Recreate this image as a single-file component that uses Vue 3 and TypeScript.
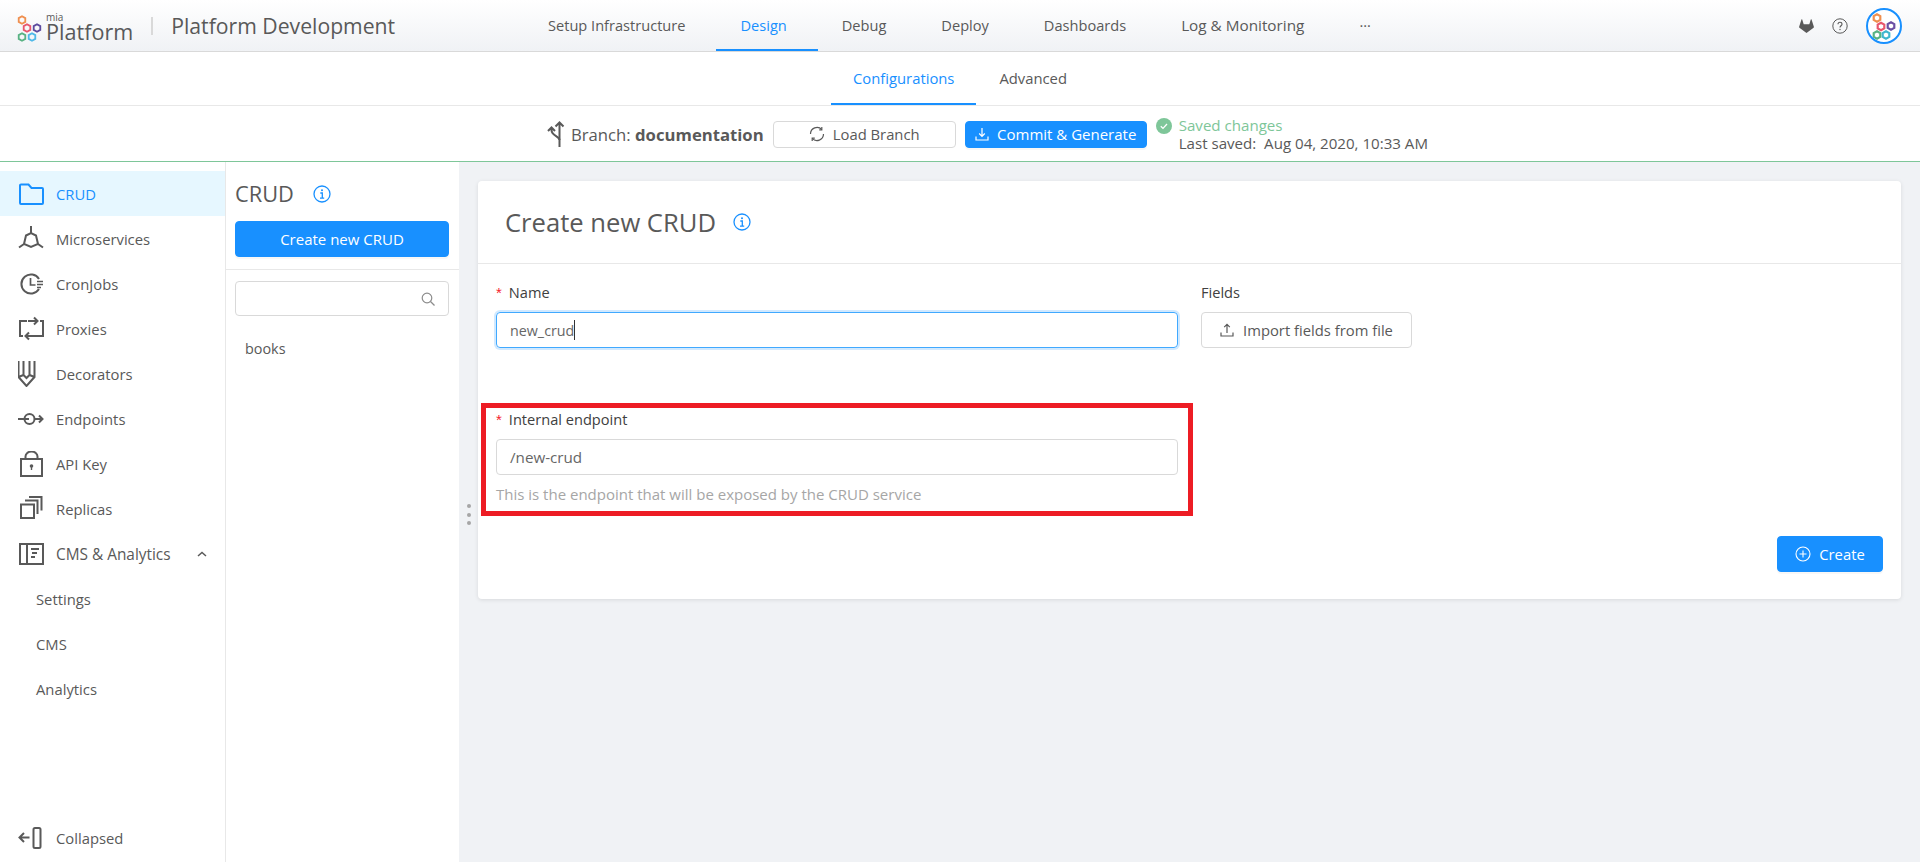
<script setup lang="ts">
import { ref } from 'vue';

interface SideItem {
  label: string;
  icon: string;
  active?: boolean;
}

interface Hex {
  x: number;
  y: number;
  color: string;
}

const topNav = ['Setup Infrastructure', 'Design', 'Debug', 'Deploy', 'Dashboards', 'Log & Monitoring', '···'];
const activeTop = ref('Design');

const sideItems: SideItem[] = [
  { label: 'CRUD', icon: 'folder', active: true },
  { label: 'Microservices', icon: 'micro' },
  { label: 'CronJobs', icon: 'cron' },
  { label: 'Proxies', icon: 'proxy' },
  { label: 'Decorators', icon: 'deco' },
  { label: 'Endpoints', icon: 'endpoint' },
  { label: 'API Key', icon: 'key' },
  { label: 'Replicas', icon: 'replica' },
];
const subItems = ['Settings', 'CMS', 'Analytics'];

const logoHexes: Hex[] = [
  { x: 5, y: 5, color: '#ef8f4f' },
  { x: 10, y: 13, color: '#e8566d' },
  { x: 20, y: 13, color: '#5c4a9e' },
  { x: 5, y: 22, color: '#58b283' },
  { x: 15, y: 22, color: '#4fb9e8' },
];

const avatarHexes: Hex[] = [
  { x: 9, y: 8, color: '#ef8f4f' },
  { x: 13, y: 16.5, color: '#e8566d' },
  { x: 23, y: 16, color: '#6a4fa3' },
  { x: 9, y: 25, color: '#58b283' },
  { x: 18, y: 25, color: '#3fb7cf' },
];

function hexPoints(cx: number, cy: number, r: number): string {
  const pts: string[] = [];
  for (let i = 0; i < 6; i++) {
    const a = (Math.PI / 3) * i + Math.PI / 6;
    pts.push(`${(cx + r * Math.cos(a)).toFixed(2)},${(cy + r * Math.sin(a)).toFixed(2)}`);
  }
  return pts.join(' ');
}
</script>

<template>
  <div class="page">
    <header class="topbar">
      <div class="brand">
        <svg class="logo" width="25" height="27" viewBox="0 0 25 27" fill="none" stroke-width="1.800">
          <polygon v-for="h in logoHexes" :key="h.color" :points="hexPoints(h.x, h.y, 3.800)" :stroke="h.color" />
        </svg>
        <div class="wordmark">
          <span class="mia">mia</span>
          <span class="platform">Platform</span>
        </div>
        <span class="brand-sep"></span>
        <span class="project">Platform Development</span>
      </div>
      <nav class="top-nav">
        <a
          v-for="item in topNav"
          :key="item"
          class="top-link"
          :class="{ active: item === activeTop, amp: item.includes('&') }"
        >{{ item }}</a>
      </nav>
      <div class="top-icons">
        <svg width="15" height="14" viewBox="0 0 16 15" fill="#595959">
          <path d="M8 15L.4 9.300C.1 9.100 0 8.700.1 8.400L2.600.6c.1-.4.6-.4.8 0L5 5.500h6L12.600.6c.2-.4.700-.4.800 0l2.500 7.800c.1.300 0 .7-.3.900z" />
        </svg>
        <svg width="16" height="16" viewBox="0 0 16 16" fill="none" stroke="#595959">
          <circle cx="8" cy="8" r="7.200" stroke-width="1" />
          <path d="M6 6.300c0-1.200.9-2 2-2s2 .8 2 1.900c0 1.500-2 1.600-2 3.200" stroke-width="1.100" />
          <circle cx="8" cy="11.500" r=".7" fill="#595959" stroke="none" />
        </svg>
        <div class="avatar">
          <svg width="32" height="32" viewBox="0 0 32 32" fill="none" stroke-width="2.200">
            <polygon v-for="h in avatarHexes" :key="h.color" :points="hexPoints(h.x, h.y, 3.800)" :stroke="h.color" />
          </svg>
        </div>
      </div>
    </header>

    <div class="subnav">
      <a class="sub-link active">Configurations</a>
      <a class="sub-link">Advanced</a>
    </div>

    <div class="branchbar">
      <svg class="branch-icon" width="18" height="26" viewBox="0 0 18 26" fill="none" stroke="#595959" stroke-width="2">
        <path d="M12.500 26V1.500M8.500 5.500L12.500 1.500 16.500 5.500" />
        <path d="M12.500 19C12.500 15 4.500 15 4.500 9V7M1 10L4.500 6.500 8 10" />
      </svg>
      <span class="branch-label">Branch: <b>documentation</b></span>
      <button class="btn btn-default load-btn">
        <svg width="16" height="16" viewBox="0 0 16 16" fill="none" stroke="#595959" stroke-width="1.200">
          <path d="M14.500 8A6.500 6.500 0 0 1 3.200 12.400M1.500 8A6.500 6.500 0 0 1 12.800 3.600" />
          <path d="M12.800 1v2.800h-2.600M3.200 15v-2.800h2.600" />
        </svg>
        Load Branch
      </button>
      <button class="btn btn-primary commit-btn">
        <svg width="14" height="14" viewBox="0 0 14 14" fill="none" stroke="#fff" stroke-width="1.200">
          <path d="M7 1v8M4.200 6.500L7 9.300l2.800-2.800M1 9.500V13h12V9.500" />
        </svg>
        Commit &amp; Generate
      </button>
      <div class="saved">
        <svg width="16" height="16" viewBox="0 0 16 16">
          <circle cx="8" cy="8" r="8" fill="#7ec699" />
          <path d="M4.800 8.200l2.200 2.200 4-4.400" fill="none" stroke="#fff" stroke-width="1.300" />
        </svg>
        <div class="saved-text">
          <div class="saved-title">Saved changes</div>
          <div class="saved-date">Last saved:&nbsp; Aug 04, 2020, 10:33 AM</div>
        </div>
      </div>
    </div>

    <div class="body">
      <aside class="sidebar">
        <ul class="side-list">
          <li v-for="item in sideItems" :key="item.label" class="side-item" :class="{ active: item.active }">
            <svg class="side-icon" width="26" height="26" viewBox="0 0 26 26" fill="none" stroke="currentColor" stroke-width="2">
              <path v-if="item.icon === 'folder'" d="M2 4.500a1 1 0 0 1 1-1h7.500l3 3.500H24a1 1 0 0 1 1 1V22a1 1 0 0 1-1 1H3a1 1 0 0 1-1-1z" />
              <template v-else-if="item.icon === 'micro'">
                <path d="M13 0v7M8 9.500L13 7l5 2.500L20 18l-7 3-7-3zM20 18l5 3.500M6 18l-5 3.500" />
              </template>
              <template v-else-if="item.icon === 'cron'">
                <path d="M21 8A9.500 9.500 0 1 0 21 18" />
                <path d="M12.500 7v7h5M19 10.500h6M19 13.500h6M19 16.500h4" stroke-width="1.700" />
              </template>
              <template v-else-if="item.icon === 'proxy'">
                <path d="M9 5H2v15h3M17 20h8V5h-3" />
                <path d="M10 5h9M16 1.500L19.500 5 16 8.500M17 20H8M11 16.500L7.500 20l3.500 3.500" />
              </template>
              <template v-else-if="item.icon === 'deco'">
                <path transform="translate(-1.500 0)" d="M2 0v16l8 9 8-9V0M7 0v14M13 0v14M2 16l5-2 3 3 3-3 5 2" />
              </template>
              <template v-else-if="item.icon === 'endpoint'">
                <circle cx="11.500" cy="13" r="5" />
                <path d="M0 13h11M17 13h8M21 9.500l3.500 3.500-3.500 3.500" />
              </template>
              <template v-else-if="item.icon === 'key'">
                <path d="M3 8h21v17H3zM7.500 8V5.500a6 5 0 0 1 12 0V8" />
                <circle cx="13.500" cy="15" r="1.800" fill="currentColor" stroke="none" />
                <path d="M13.500 15v4" stroke-width="1.400" />
              </template>
              <template v-else-if="item.icon === 'replica'">
                <path d="M3 8.500h13V22H3zM7 4.500h12.500V18M11 1h12.500v13.500" />
              </template>
            </svg>
            <span>{{ item.label }}</span>
          </li>
          <li class="side-item">
            <svg class="side-icon" width="26" height="26" viewBox="0 0 26 26" fill="none" stroke="currentColor" stroke-width="2">
              <path d="M2 3h23v20H2zM9 3v20M13 8h8M14 12h5M13 16h4" />
            </svg>
            <span class="cms-label">CMS &amp; Analytics</span>
            <svg class="chevron" width="10" height="6" viewBox="0 0 10 6" fill="none" stroke="#595959" stroke-width="1.500">
              <path d="M1 5l4-3.500L9 5" />
            </svg>
          </li>
          <li v-for="sub in subItems" :key="sub" class="side-item sub">{{ sub }}</li>
        </ul>
        <div class="side-item collapse">
          <svg class="side-icon" width="26" height="26" viewBox="0 0 26 26" fill="none" stroke="currentColor" stroke-width="2">
            <path d="M1.500 12.500h10M6 8l-4.500 4.500L6 17" />
            <rect x="15.500" y="3" width="7" height="20" rx="1.500" />
          </svg>
          <span>Collapsed</span>
        </div>
      </aside>

      <section class="list-col">
        <div class="list-head">
          <div class="list-title">
            CRUD
            <svg class="info" width="18" height="18" viewBox="0 0 18 18" fill="none" stroke="#1890ff" stroke-width="1.300">
              <circle cx="9" cy="9" r="8" />
              <path d="M7.300 8h2v5M7 13.200h4.200" />
              <circle cx="9" cy="5.200" r="1" fill="#1890ff" stroke="none" />
            </svg>
          </div>
          <button class="btn btn-primary new-btn">Create new CRUD</button>
        </div>
        <div class="list-body">
          <div class="search">
            <svg width="14" height="14" viewBox="0 0 14 14" fill="none" stroke="#8c8c8c" stroke-width="1.200">
              <circle cx="6" cy="6" r="4.800" />
              <path d="M9.500 9.500L13.500 13.500" />
            </svg>
          </div>
          <div class="list-row">books</div>
        </div>
      </section>

      <div class="splitter">
        <i></i><i></i><i></i>
      </div>

      <main class="content">
        <div class="card">
          <div class="card-head">
            <span>Create new CRUD</span>
            <svg width="18" height="18" viewBox="0 0 18 18" fill="none" stroke="#1890ff" stroke-width="1.300">
              <circle cx="9" cy="9" r="8" />
              <path d="M7.300 8h2v5M7 13.200h4.200" />
              <circle cx="9" cy="5.200" r="1" fill="#1890ff" stroke="none" />
            </svg>
          </div>
          <div class="card-body">
            <div class="form-row">
              <div class="field wide">
                <label class="label"><em>*</em>Name</label>
                <div class="input focused name-input">new_crud<span class="caret"></span></div>
              </div>
              <div class="field">
                <label class="label">Fields</label>
                <button class="btn btn-default import-btn">
                  <svg width="14" height="14" viewBox="0 0 14 14" fill="none" stroke="#595959" stroke-width="1.200">
                    <path d="M7 10V1.500M4.200 4.200L7 1.400l2.800 2.800M1 9.500V13h12V9.500" />
                  </svg>
                  Import fields from file
                </button>
              </div>
            </div>
            <div class="field wide highlighted">
              <label class="label"><em>*</em>Internal endpoint</label>
              <div class="input endpoint-input">/new-crud</div>
              <div class="help">This is the endpoint that will be exposed by the CRUD service</div>
            </div>
            <div class="actions">
              <button class="btn btn-primary create-btn">
                <svg width="16" height="16" viewBox="0 0 16 16" fill="none" stroke="#fff" stroke-width="1.100">
                  <circle cx="8" cy="8" r="7" />
                  <path d="M8 4.500v7M4.500 8h7" />
                </svg>
                Create
              </button>
            </div>
          </div>
        </div>
      </main>
    </div>
  </div>
</template>

<style>
html, body {
  margin: 0;
  background: #f0f2f5;
}
</style>

<style scoped>
.page {
  width: 1920px;
  height: 862px;
  display: flex;
  flex-direction: column;
  overflow: hidden;
  font-family: "Open Sans", "Noto Sans", sans-serif;
  font-size: 14.6px;
  color: #595959;
  background: #f0f2f5;
}

.topbar {
  height: 51px;
  flex: none;
  display: flex;
  align-items: center;
  background: linear-gradient(#ffffff, #f0f2f5);
  border-bottom: 1px solid #d9d9d9;
}

.brand {
  width: 524px;
  display: flex;
  align-items: center;
  flex: none;
  padding-left: 17px;
  box-sizing: border-box;
}

.logo {
  flex: none;
  align-self: flex-start;
  margin-top: 6px;
}

.wordmark {
  display: flex;
  flex-direction: column;
  margin-left: 4px;
  margin-top: 3px;
}

.mia {
  font-size: 10px;
  line-height: 9px;
  color: #595959;
}

.platform {
  font-size: 21.600px;
  line-height: 20px;
  color: #58595b;
}

.brand-sep {
  width: 2px;
  height: 18px;
  background: #d9d9d9;
  margin: 0 18px;
}

.project {
  font-size: 21.200px;
  color: #595959;
}

.top-nav {
  display: flex;
  align-self: stretch;
}

.top-link {
  padding: 0 31px 0 24px;
  display: flex;
  align-items: center;
  border-bottom: 2px solid transparent;
  height: 51px;
  box-sizing: border-box;
}

.top-link.amp {
  font-size: 15.300px;
}

.top-link.active {
  color: #1890ff;
  border-bottom-color: #1890ff;
}

.top-icons {
  margin-left: auto;
  display: flex;
  align-items: center;
  padding-right: 18px;
  gap: 18px;
}

.avatar {
  width: 36px;
  height: 36px;
  border: 2px solid #1890ff;
  border-radius: 50%;
  box-sizing: border-box;
  background: #fff;
  overflow: hidden;
}

.avatar svg {
  display: block;
}

.subnav {
  height: 53px;
  flex: none;
  display: flex;
  justify-content: center;
  gap: 1px;
  background: #fff;
  border-bottom: 1px solid #e8e8e8;
}

.sub-link {
  padding: 0 22px;
  display: flex;
  align-items: center;
  height: 53px;
  box-sizing: border-box;
  border-bottom: 2px solid transparent;
  font-size: 14.800px;
}

.sub-link.active {
  color: #1890ff;
  border-bottom-color: #1890ff;
}

.branchbar {
  height: 54px;
  padding: 1px 0 0 547px;
  flex: none;
  display: flex;
  align-items: center;
  background: #fff;
  border-bottom: 1px solid #7ec699;
}

.branch-icon {
  flex: none;
  margin-right: 6px;
}

.branch-label {
  font-size: 16.700px;
  margin-right: 9px;
}

.branch-label b {
  font-weight: 700;
}

.btn {
  font-family: inherit;
  font-size: 14.800px;
  border-radius: 4px;
  display: inline-flex;
  align-items: center;
  justify-content: center;
  gap: 8px;
  padding: 0;
  box-sizing: border-box;
  cursor: pointer;
}

.btn-default {
  background: #fff;
  color: #595959;
  border: 1px solid #d9d9d9;
}

.btn-primary {
  background: #1890ff;
  color: #fff;
  border: 1px solid #1890ff;
  box-shadow: 0 2px 0 rgba(0, 0, 0, 0.03);
}

.load-btn {
  width: 183px;
  height: 27px;
  margin-right: 9px;
}

.commit-btn {
  width: 182px;
  height: 27px;
  margin-right: 9px;
  font-size: 15px;
}

.saved {
  display: flex;
  gap: 7px;
  align-items: flex-start;
  font-size: 15.100px;
  line-height: 18px;
  margin-top: -1px;
}

.saved svg {
  margin-top: 2px;
}

.saved-title {
  color: #7ec699;
}

.body {
  flex: 1;
  display: flex;
  min-height: 0;
}

.sidebar {
  width: 226px;
  flex: none;
  box-sizing: border-box;
  background: #fff;
  border-right: 1px solid #e8e8e8;
  padding-top: 9px;
  display: flex;
  flex-direction: column;
}

.side-list {
  list-style: none;
  margin: 0;
  padding: 0;
  flex: 1;
}

.side-item {
  height: 45px;
  box-sizing: border-box;
  display: flex;
  align-items: center;
  padding: 1px 18px 0;
  font-size: 14.800px;
  color: #595959;
}

.side-item.active {
  background: #e6f7ff;
  color: #1890ff;
}

.side-icon {
  flex: none;
  margin-right: 12px;
}

.side-item.sub {
  padding-left: 36px;
}

.cms-label {
  font-size: 15.400px;
}

.chevron {
  margin-left: auto;
}

.collapse {
  margin-bottom: 2px;
}

.list-col {
  width: 233px;
  flex: none;
  background: #fff;
  display: flex;
  flex-direction: column;
}

.list-head {
  padding: 18px 10px 12px 9px;
  border-bottom: 1px solid #e8e8e8;
}

.list-title {
  font-size: 21.800px;
  line-height: 28px;
  display: flex;
  align-items: center;
  gap: 19px;
  margin-bottom: 13px;
}

.new-btn {
  width: 214px;
  height: 36px;
  font-size: 15px;
}

.list-body {
  padding: 11px 10px 0 9px;
}

.search {
  height: 35px;
  border: 1px solid #d9d9d9;
  border-radius: 4px;
  box-sizing: border-box;
  display: flex;
  align-items: center;
  justify-content: flex-end;
  padding-right: 13px;
}

.list-row {
  padding: 22px 0 0 10px;
  line-height: 22px;
  font-size: 14.400px;
}

.splitter {
  width: 19px;
  flex: none;
  display: flex;
  flex-direction: column;
  align-items: center;
  gap: 4.500px;
  padding-top: 342px;
  box-sizing: border-box;
}

.splitter i {
  width: 4px;
  height: 4px;
  border-radius: 50%;
  background: #a6a6a6;
}

.content {
  flex: 1;
  padding: 19px 19px 0 0;
  min-width: 0;
}

.card {
  height: 418px;
  background: #fff;
  border-radius: 4px;
  box-shadow: 0 1px 4px rgba(0, 0, 0, 0.1);
  display: flex;
  flex-direction: column;
}

.card-head {
  height: 83px;
  flex: none;
  box-sizing: border-box;
  display: flex;
  align-items: center;
  gap: 17px;
  padding-left: 27px;
  font-size: 25.600px;
  color: #595959;
  border-bottom: 1px solid #e8e8e8;
}

.card-body {
  padding: 18px 18px 0;
  flex: 1;
  display: flex;
  flex-direction: column;
}

.form-row {
  display: flex;
  gap: 23px;
  margin-bottom: 35px;
  height: 92px;
}

.field {
  display: flex;
  flex-direction: column;
}

.wide {
  width: 682px;
}

.label {
  height: 22px;
  line-height: 20px;
  color: #404040;
  margin-bottom: 8px;
}

.label em {
  font-style: normal;
  font-size: 15px;
  color: #f5222d;
  margin-right: 7px;
  font-family: "Liberation Sans", sans-serif;
}

.input {
  height: 36px;
  box-sizing: border-box;
  border: 1px solid #d9d9d9;
  border-radius: 4px;
  display: flex;
  align-items: center;
  padding-left: 13px;
  color: #666;
}

.name-input {
  font-size: 14.300px;
}

.endpoint-input {
  font-size: 15.200px;
}

.input.focused {
  border-color: #40a9ff;
  box-shadow: 0 0 0 2px rgba(24, 144, 255, 0.2);
}

.caret {
  display: inline-block;
  width: 1px;
  height: 20px;
  background: #333;
}

.import-btn {
  width: 211px;
  height: 36px;
  gap: 9px;
}

.help {
  margin-top: 8px;
  line-height: 22px;
  font-size: 15px;
  color: #a6a6a6;
}

.highlighted {
  position: relative;
}

.highlighted::after {
  content: '';
  position: absolute;
  inset: -6px -15px -11px -15px;
  border: 5px solid #ed1c24;
  pointer-events: none;
}

.actions {
  display: flex;
  justify-content: flex-end;
  margin-top: 31px;
}

.create-btn {
  width: 106px;
  height: 36px;
}
</style>
